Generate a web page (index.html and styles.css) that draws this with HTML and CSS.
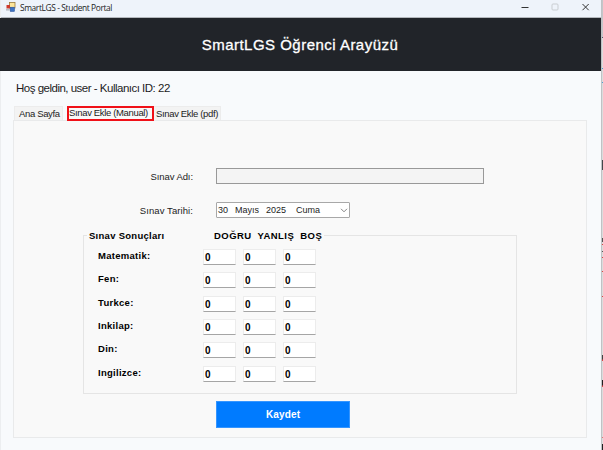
FILE: index.html
```html
<!DOCTYPE html>
<html lang="tr">
<head>
<meta charset="utf-8">
<title>SmartLGS - Student Portal</title>
<link rel="stylesheet" href="styles.css">
</head>
<body>
<div class="window">
  <div class="titlebar">
    <svg class="app-icon" width="10" height="10" viewBox="0 0 10 10">
      <rect x="3.5" y=".5" width="5.5" height="5.5" fill="#fce59a" stroke="#9a7a3c" stroke-width=".8"/>
      <rect x=".5" y="3" width="3.5" height="3.5" fill="#cf3a2c"/>
      <rect x="0" y="6.8" width="3.8" height="1.8" fill="#b9bec6"/>
      <rect x="4.2" y="5.2" width="4.3" height="4.3" fill="#3c72c4" stroke="#274f94" stroke-width=".5"/>
    </svg>
    <span class="app-name">SmartLGS - Student Portal</span>
    <svg class="controls" width="80" height="17" viewBox="0 0 80 17" fill="none">
      <path d="M4.500 7.500h7" stroke="#333" stroke-width="1"/>
      <rect x="35" y="4" width="6" height="6" rx="1" stroke="#c9cdd1"/>
      <path d="M65.500 4l6.200 6.200M71.700 4l-6.200 6.200" stroke="#333" stroke-width="1"/>
    </svg>
  </div>
  <header class="banner"><h1>SmartLGS Öğrenci Arayüzü</h1></header>
  <p class="welcome"><span>Hoş geldin, user - Kullanıcı ID: 22</span></p>
  <nav class="tabs">
    <span class="tab tab-home">Ana Sayfa</span>
    <span class="tab tab-active">Sınav Ekle (Manual)</span>
    <span class="tab tab-pdf">Sınav Ekle (pdf)</span>
  </nav>
  <main class="panel">
    <div class="field field-name">
      <label>Sınav Adı:</label>
      <div class="text-input"></div>
    </div>
    <div class="field field-date">
      <label>Sınav Tarihi:</label>
      <div class="date-input">
        <span class="day">30</span><span class="month">Mayıs</span><span class="year">2025</span><span class="weekday">Cuma</span>
        <svg width="8" height="5" viewBox="0 0 8 5"><path d="M1 .8l3 3 3-3" fill="none" stroke="#777" stroke-width=".9"/></svg>
      </div>
    </div>
    <section class="results">
      <div class="legend">
        <span class="caption">Sınav Sonuçları</span>
        <span class="columns">DOĞRU&nbsp; YANLIŞ&nbsp; BOŞ</span>
        <span class="rule"></span>
      </div>
      <div class="rows">
        <div class="row"><label>Matematik:</label><b>0</b><b>0</b><b>0</b></div>
        <div class="row"><label>Fen:</label><b>0</b><b>0</b><b>0</b></div>
        <div class="row"><label>Turkce:</label><b>0</b><b>0</b><b>0</b></div>
        <div class="row"><label>Inkilap:</label><b>0</b><b>0</b><b>0</b></div>
        <div class="row"><label>Din:</label><b>0</b><b>0</b><b>0</b></div>
        <div class="row"><label>Ingilizce:</label><b>0</b><b>0</b><b>0</b></div>
      </div>
    </section>
    <button class="save" type="button">Kaydet</button>
  </main>
</div>
<div class="edge"></div>
</body>
</html>
```
FILE: styles.css
```css
* { box-sizing: border-box; }
body {
  margin: 0;
  width: 603px;
  height: 450px;
  display: flex;
  overflow: hidden;
  font-family: "Liberation Sans", Arial, sans-serif;
  font-size: 9.5px;
  color: #1c1c1c;
  white-space: nowrap;
}
.window {
  width: 601px;
  height: 450px;
  background: #f8fafc;
  border-left: 1px solid #eceef0;
}
.titlebar {
  height: 18px;
  display: flex;
  background: #eef3fa;
  border-bottom: 1px solid #b4b8bd;
}
.app-icon { margin: 2px 0 0 5px; }
.app-name {
  margin-left: 4px;
  font: 8.4px/15px "Open Sans", sans-serif;
  letter-spacing: -.38px;
}
.controls { margin-left: auto; margin-right: 4px; }
.banner {
  height: 53px;
  margin-left: -1px;
  background: #212429;
  display: flex;
  justify-content: center;
}
h1 {
  margin: 0 0 0 -1px;
  font-size: 15px;
  line-height: 54px;
  font-weight: normal;
  letter-spacing: .48px;
  color: #fff;
  -webkit-text-stroke: .3px #fff;
}
.welcome {
  margin: 0;
  height: 35px;
  padding: 8px 0 0 15px;
  font-size: 11.5px;
  line-height: 18px;
  letter-spacing: -.5px;
}
.tabs {
  height: 14px;
  display: flex;
  padding-left: 13px;
  letter-spacing: -.35px;
}
.tab {
  height: 14px;
  background: #f3f3f3;
  border: 1px solid #ececec;
  border-bottom: 0;
  line-height: 14px;
}
.tab-home { width: 49px; padding-left: 4px; }
.tab-active {
  width: 87px;
  margin-left: 4px;
  height: 15px;
  border: 2px solid #f01018;
  background: #f9f9f9;
  line-height: 9px;
  position: relative;
}
.tab-pdf { width: 67px; padding-left: 2px; border-left: 0; }
.panel {
  width: 574px;
  height: 318px;
  margin-left: 12px;
  border: 1px solid #e9eaeb;
  background: #f9f9f9;
}
.field { display: flex; }
.field label { width: 179px; text-align: right; line-height: 17px; }
.field-name { margin-top: 47px; }
.field-name label { letter-spacing: -.08px; }
.field-date { margin-top: 17px; }
.field-date label { letter-spacing: .08px; }
.text-input {
  width: 268px;
  height: 16px;
  margin-left: 23px;
  border: 1px solid #999;
  background: #f4f4f4;
}
.date-input {
  width: 134px;
  height: 16px;
  margin-left: 23px;
  border: 1px solid #a8a8a8;
  border-radius: 1px;
  background: #fff;
  display: flex;
  align-items: center;
  padding-left: 1px;
  font-size: 9px;
}
.day { width: 17px; }
.month { width: 31px; }
.year { width: 30px; }
.weekday { width: 44px; }
.results {
  width: 434px;
  height: 159px;
  margin: 16px 0 0 69px;
  border: 1px solid #e5e5e5;
  border-top: 0;
  font-weight: bold;
  font-size: 9.5px;
  letter-spacing: .28px;
  color: #000;
}
.legend {
  display: flex;
  height: 9px;
  margin-left: -1px;
  line-height: 1px;
}
.legend::before, .rule { content: ""; height: 1px; background: #e5e5e5; }
.legend::before { width: 4px; }
.caption { width: 125px; padding-left: 2px; }
.columns { width: 112px; padding-left: 2px; letter-spacing: .44px; }
.rule { flex: 1; }
.rows {
  display: grid;
  grid-auto-rows: 23.35px;
  padding: 5px 0 0 14px;
}
.row {
  display: grid;
  grid-template-columns: 98px 33px 33px 33px;
  column-gap: 7px;
}
.row label { line-height: 13px; }
.row b {
  height: 16px;
  border: 1px solid #ececec;
  border-bottom-color: #a5a5a5;
  background: #fff;
  font-size: 10px;
  line-height: 15px;
  padding-left: 1px;
}
.save {
  display: block;
  width: 134px;
  height: 27px;
  margin: 7px 0 0 202px;
  padding: 0;
  border: 1px solid #3595ff;
  background: #007bff;
  color: #fff;
  font: bold 10px "Liberation Sans", Arial, sans-serif;
  letter-spacing: .15px;
}
.edge {
  width: 2px;
  background: linear-gradient(90deg, #c0c2c5 50%, transparent 50%),
    linear-gradient(#c4c6c9 0 37px, #54576b 37px 38px, #dcdcdc 38px 68px, #4c9ed2 68px 69px, #dcdcdc 69px 82px, #4c9ed2 82px 83px, #dcdcdc 83px 160px, #45474b 160px 170px, #dcdcdc 170px 238px, #555 238px 242px, #dcdcdc 242px 244px, #d44 244px 245px, #dcdcdc 245px 251px, #555 251px 252px, #dcdcdc 252px 257px, #d44 257px 258px, #dcdcdc 258px 271px, #d44 271px 272px, #dcdcdc 272px 296px, #d44 296px 297px, #dcdcdc 297px 355px, #444 355px 359px, #d44 360px 361px, #dcdcdc 361px 380px, #222 380px 385px, #d44 386px 387px, #dcdcdc 387px 437px, #d77 437px 438px, #dcdcdc 438px 444px, #222 444px 450px);
}
```
